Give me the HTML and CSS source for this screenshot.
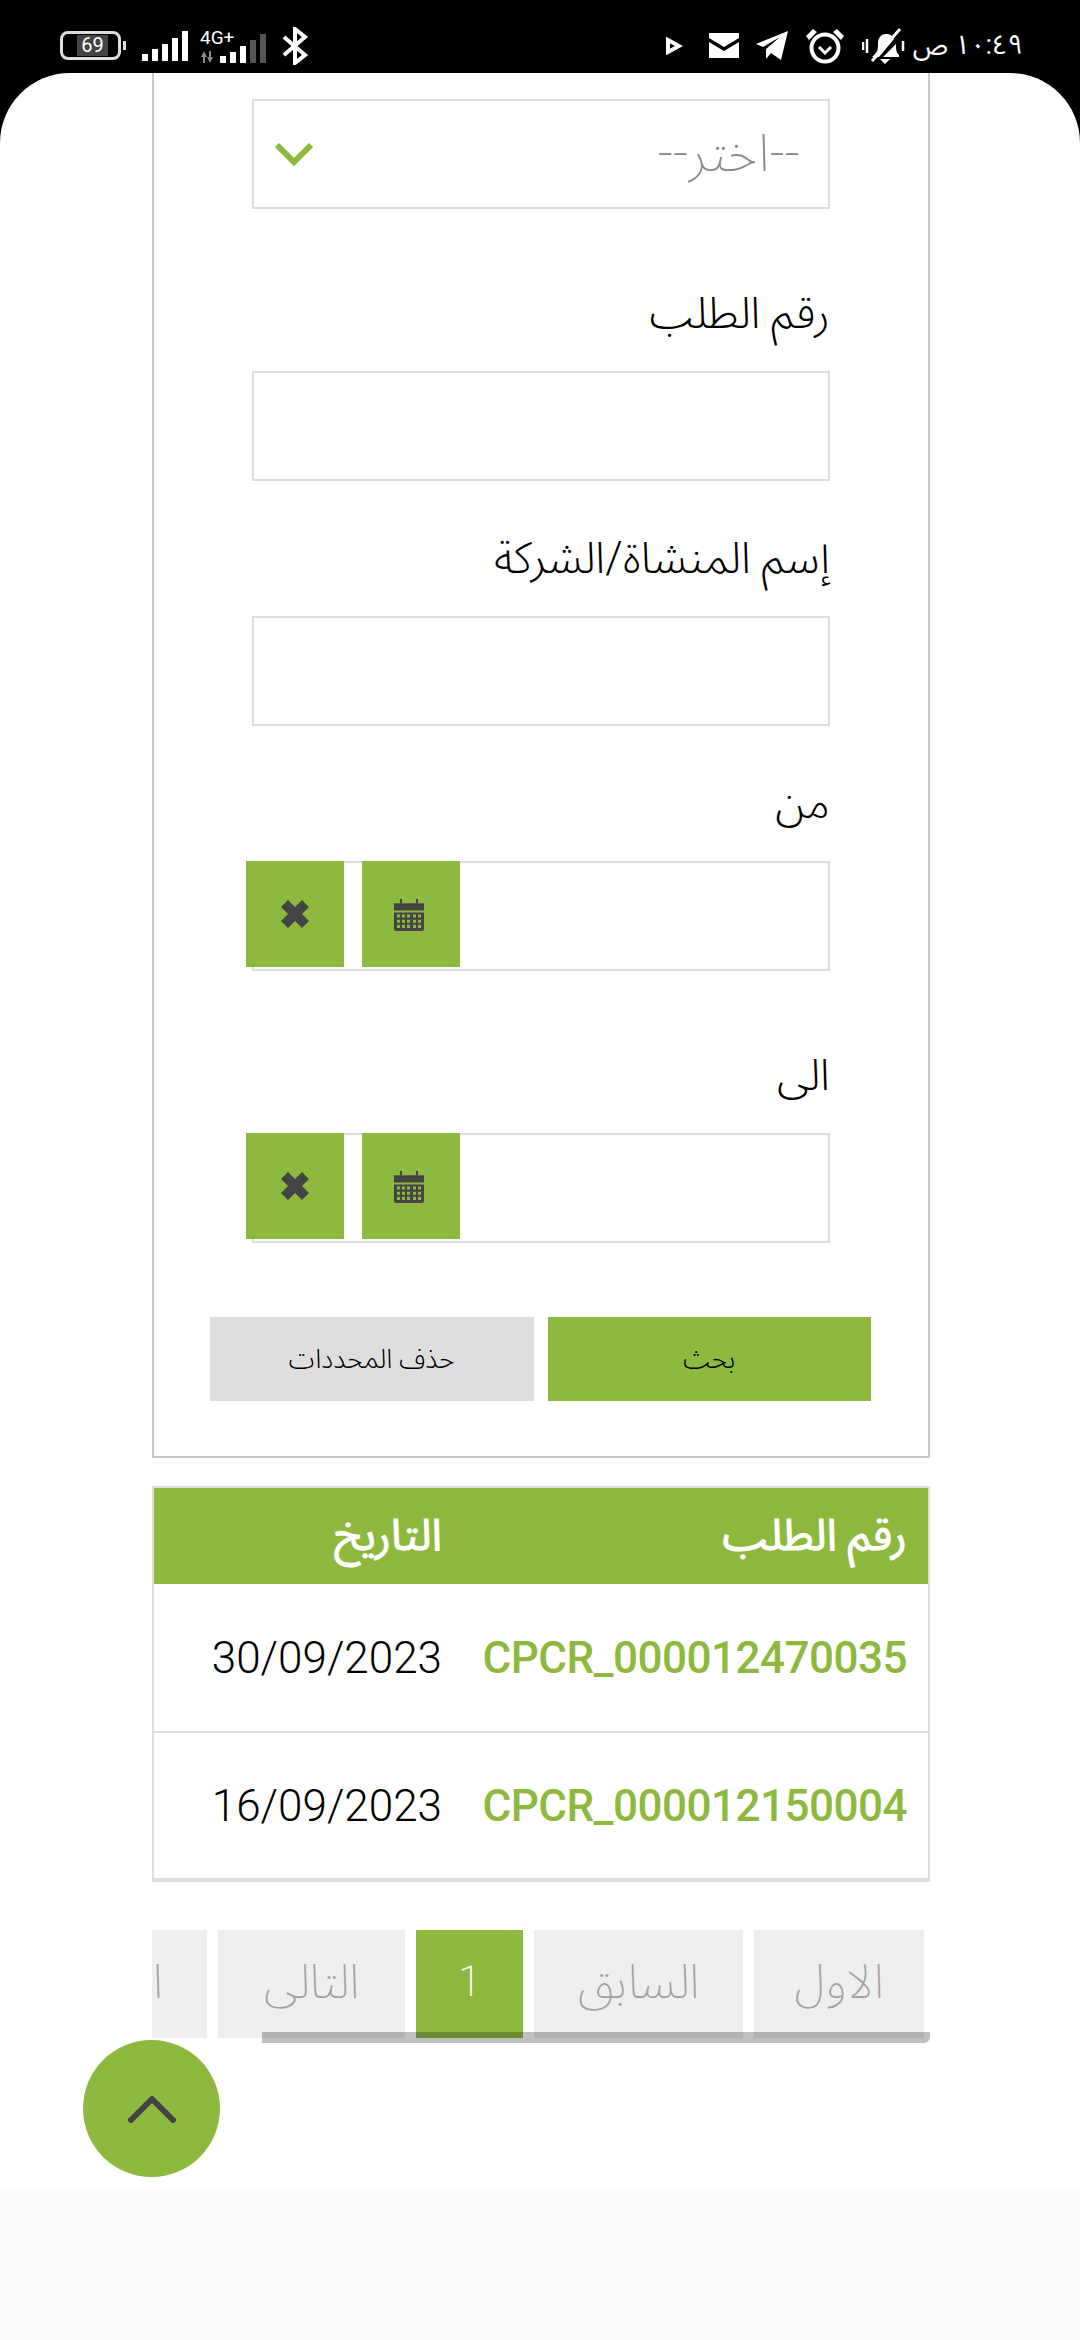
FILE: index.html
```html
<!DOCTYPE html>
<html lang="ar">
  <head>
    <meta charset="UTF-8" />
    <meta name="viewport" content="width=device-width, initial-scale=1.0" />
    <title>البحث عن الطلبات</title>
    <link rel="stylesheet" href="styles.css">
  </head>
  <body>
    <!-- phone status bar -->
    <div class="statusbar">
      <div class="status-left">
        <div class="battery"><span class="battery-level">69</span><i class="battery-nub"></i></div>
        <svg class="signal" width="46" height="30" viewBox="0 0 46 30">
          <path fill="#fff" d="M0 23h6v7H0zM10 18h6v12h-6zM20 13h6v17h-6zM30 7h6v23h-6zM40 0h6v30h-6z"/>
        </svg>
        <div class="signal-two">
          <span class="net-label">4G+</span>
          <svg width="70" height="30" viewBox="0 0 70 30">
            <path fill="#888" d="M1 24l3-6 3 6H5v6H3v-6zM9 18h2v6h2l-3 6-3-6h2z"/>
            <path fill="#fff" d="M20 23h6v7h-6zM30 19h6v11h-6zM40 13h6v17h-6z"/>
            <path fill="#555" d="M50 7h6v23h-6zM60 1h6v29h-6z"/>
          </svg>
        </div>
        <svg class="bluetooth" width="26" height="38" viewBox="0 0 26 38">
          <path fill="none" stroke="#fff" stroke-width="4" stroke-linejoin="miter" d="M2 10l21 18-10 8V2l10 8L2 28"/>
        </svg>
      </div>
      <div class="status-right">
        <svg class="icon-play" width="18" height="18" viewBox="0 0 18 18">
          <path fill="none" stroke="#fff" stroke-width="4" d="M3 3l11 6-11 6z"/>
        </svg>
        <svg width="30" height="25" viewBox="0 0 30 25">
          <path fill="#fff" d="M0 0h30v5L15 14 0 5zM0 9l15 9 15-9v16H0z"/>
        </svg>
        <svg width="32" height="29" viewBox="0 0 32 29">
          <path fill="#fff" d="M32 0L25 29 15 22 10 28V18L24 6 7 16 0 13z"/>
        </svg>
        <svg width="40" height="36" viewBox="0 0 40 36">
          <circle cx="20" cy="20" r="13.5" fill="none" stroke="#fff" stroke-width="4"/>
          <path fill="none" stroke="#fff" stroke-width="3" d="M14 19l6 6 6-6"/>
          <path fill="#fff" d="M1 8l7-7 4 3-8 8zM39 8l-7-7-4 3 8 8z"/>
        </svg>
        <svg width="44" height="38" viewBox="0 0 44 38">
          <path fill="#fff" d="M13 27c3-3 3-6 3-11 0-6 4-9 8-9s7 2 8 5L17 30h-7zM34 17c0 5 0 8 3 11v2H21zM18 32h10l-5 5z"/>
          <path stroke="#fff" stroke-width="3" d="M38 2L10 34"/>
          <path stroke="#fff" stroke-width="2.5" d="M5 12v14M1 15v8M41 14v10"/>
        </svg>
        <span class="status-time">١٠:٤٩ ص</span>
      </div>
    </div>

    <div class="sheet">
      <div class="search-panel">
        <div class="select-box">
          <span class="select-text">--اختر--</span>
          <svg class="select-arrow" width="38" height="24" viewBox="0 0 38 24">
            <path fill="none" stroke="#8eb93f" stroke-width="6" d="M2 3l17 17L36 3"/>
          </svg>
        </div>

        <label class="field-label field-label-gap">رقم الطلب</label>
        <div class="text-box"></div>

        <label class="field-label">إسم المنشاة/الشركة</label>
        <div class="text-box"></div>

        <label class="field-label">من</label>
        <div class="text-box date-box">
          <button class="date-btn date-btn-cal" type="button">
            <svg width="30" height="33" viewBox="0 0 30 32" preserveAspectRatio="none">
              <path fill="#444" d="M0 5h6V1h2v4h14V1h2v4h6v7H0z"/>
              <path fill="#444" fill-rule="evenodd" d="M0 14h30v16a2 2 0 0 1-2 2H2a2 2 0 0 1-2-2zM3 16v3h3v-3zM8 16v3h3v-3zM13 16v3h3v-3zM19 16v3h3v-3zM24 16v3h3v-3zM3 21v3h3v-3zM8 21v3h3v-3zM13 21v3h3v-3zM19 21v3h3v-3zM24 21v3h3v-3zM3 26v3h3v-3zM8 26v3h3v-3zM13 26v3h3v-3zM19 26v3h3v-3zM24 26v3h3v-3z"/>
            </svg>
          </button>
          <button class="date-btn date-btn-clear" type="button">
            <svg width="28" height="28" viewBox="0 0 28 28">
              <path fill="#444" d="M7 0l7 7 7-7 7 7-7 7 7 7-7 7-7-7-7 7-7-7 7-7-7-7z"/>
            </svg>
          </button>
        </div>

        <label class="field-label field-label-gap">الى</label>
        <div class="text-box date-box">
          <button class="date-btn date-btn-cal" type="button">
            <svg width="30" height="33" viewBox="0 0 30 32" preserveAspectRatio="none">
              <path fill="#444" d="M0 5h6V1h2v4h14V1h2v4h6v7H0z"/>
              <path fill="#444" fill-rule="evenodd" d="M0 14h30v16a2 2 0 0 1-2 2H2a2 2 0 0 1-2-2zM3 16v3h3v-3zM8 16v3h3v-3zM13 16v3h3v-3zM19 16v3h3v-3zM24 16v3h3v-3zM3 21v3h3v-3zM8 21v3h3v-3zM13 21v3h3v-3zM19 21v3h3v-3zM24 21v3h3v-3zM3 26v3h3v-3zM8 26v3h3v-3zM13 26v3h3v-3zM19 26v3h3v-3zM24 26v3h3v-3z"/>
            </svg>
          </button>
          <button class="date-btn date-btn-clear" type="button">
            <svg width="28" height="28" viewBox="0 0 28 28">
              <path fill="#444" d="M7 0l7 7 7-7 7 7-7 7 7 7-7 7-7-7-7 7-7-7 7-7-7-7z"/>
            </svg>
          </button>
        </div>

        <div class="form-actions">
          <button class="action-btn action-search" type="button">بحث</button>
          <button class="action-btn action-reset" type="button">حذف المحددات</button>
        </div>
      </div>

      <table class="results">
        <thead>
          <tr>
            <th class="col-number">رقم الطلب</th>
            <th>التاريخ</th>
          </tr>
        </thead>
        <tbody>
          <tr>
            <td class="col-number"><a href="#">CPCR_000012470035</a></td>
            <td>30/09/2023</td>
          </tr>
          <tr>
            <td class="col-number"><a href="#">CPCR_000012150004</a></td>
            <td>16/09/2023</td>
          </tr>
        </tbody>
      </table>

      <div class="pager-wrap">
        <div class="pager">
          <a class="page-item page-first" href="#">الاول</a>
          <a class="page-item page-prev" href="#">السابق</a>
          <a class="page-item page-current" href="#">1</a>
          <a class="page-item page-next" href="#">التالى</a>
          <a class="page-item page-last" href="#">الاخير</a>
        </div>
        <div class="pager-scrollbar"></div>
      </div>

      <button class="to-top" type="button">
        <svg width="48" height="28" viewBox="0 0 48 28">
          <path fill="none" stroke="#444" stroke-width="6" stroke-linecap="round" stroke-linejoin="round" d="M3 25L24 4l21 21"/>
        </svg>
      </button>

      <div class="page-footer"></div>
    </div>
  </body>
</html>
```

FILE: styles.css
```css
* {
  box-sizing: border-box;
}
body {
  margin: 0;
  background-color: #000;
  font-family: Roboto, "Noto Sans Arabic", "DejaVu Sans", sans-serif;
  color: #000;
}

/* status bar */
.statusbar {
  height: 73px;
  display: flex;
  justify-content: space-between;
  align-items: center;
  padding: 18px 57px 0 60px;
  color: #fff;
  direction: ltr;
}
.status-left,
.status-right {
  display: flex;
  align-items: center;
}
.status-left {
  gap: 12px;
}
.status-right {
  gap: 17px;
}
.battery {
  position: relative;
  width: 61px;
  height: 29px;
  border: 3px solid #ddd;
  border-radius: 8px;
  font-size: 20px;
  line-height: 23px;
  text-align: center;
  margin-right: 9px;
}
.battery-level {
  display: block;
  margin: 1px 10px 0 14px;
  height: 21px;
  line-height: 21px;
  background-color: #444;
  color: #fff;
}
.battery-nub {
  position: absolute;
  right: -8px;
  top: 7px;
  width: 3px;
  height: 9px;
  background-color: #ddd;
}
.signal-two {
  position: relative;
  width: 70px;
  height: 34px;
  padding-top: 4px;
}
.net-label {
  position: absolute;
  left: 0;
  top: -3px;
  font-size: 19px;
}
.icon-play {
  margin-right: 9px;
}
.status-time {
  font-size: 27px;
  margin-left: -10px;
  white-space: nowrap;
  direction: rtl;
}

/* white sheet */
.sheet {
  position: relative;
  background-color: #fff;
  border-radius: 70px 70px 0 0;
  direction: rtl;
  overflow: hidden;
}

/* search form */
.search-panel {
  width: 778px;
  margin-right: 150px;
  padding: 26px 98px 55px;
  border: 2px solid #c8c8c8;
  border-top: none;
}
.select-box {
  height: 110px;
  border: 2px solid #ddd;
  display: flex;
  justify-content: space-between;
  align-items: center;
  padding: 0 28px 0 21px;
}
.select-text {
  font-size: 52px;
  color: #888;
  font-weight: 200;
}
.field-label {
  display: block;
  font-size: 44px;
  font-weight: 300;
  line-height: 56px;
  margin: 49px 0 30px;
}
.field-label-gap {
  margin-top: 76px;
}
.text-box {
  height: 110px;
  border: 2px solid #ddd;
}
.date-box {
  position: relative;
}
.date-btn {
  position: absolute;
  top: -2px;
  height: 106px;
  border: none;
  padding: 0;
  background-color: #8eb93f;
  display: flex;
  align-items: center;
  justify-content: center;
}
.date-btn-cal {
  left: 108px;
  width: 98px;
  padding-right: 4px;
}
.date-btn-clear {
  left: -8px;
  width: 98px;
}
.form-actions {
  display: flex;
  gap: 14px;
  margin: 74px -41px 0 -42px;
}
.action-btn {
  flex: 1;
  height: 84px;
  border: none;
  font-family: inherit;
  font-size: 27px;
  font-weight: 300;
  color: #000;
}
.action-search {
  background-color: #8eb93f;
}
.action-reset {
  background-color: #dfdedf;
}

/* results table */
.results {
  width: 778px;
  margin: 28px 150px 0 0;
  border-collapse: collapse;
  table-layout: fixed;
  border: 2px solid #ddd;
  border-bottom-width: 4px;
  font-size: 44px;
}
.results th {
  height: 97px;
  padding: 0 21px;
  background-color: #8eb93f;
  color: #fff;
  text-align: right;
  font-size: 44px;
  font-weight: 400;
  -webkit-text-stroke: 1px #fff;
}
.results td {
  height: 148px;
  padding: 0 21px;
  font-weight: 300;
}
.results tbody tr + tr td {
  border-top: 2px solid #ddd;
}
.col-number {
  width: 466px;
}
.results a {
  color: #8eb93f;
  text-decoration: none;
  font-weight: 500;
  letter-spacing: -0.5px;
}

/* paging */
.pager-wrap {
  position: relative;
  width: 778px;
  margin: 48px 150px 150px 0;
}
.pager {
  display: flex;
  gap: 11px;
  padding-right: 6px;
  overflow: hidden;
}
.page-item {
  flex: none;
  height: 108px;
  background-color: #eee;
  color: #a0a0a0;
  font-size: 47px;
  font-weight: 200;
  line-height: 104px;
  text-align: center;
  text-decoration: none;
}
.page-first {
  width: 170px;
}
.page-prev {
  width: 209px;
}
.page-current {
  width: 107px;
  background-color: #8eb93f;
  color: #fff;
  font-size: 42px;
}
.page-next {
  width: 187px;
}
.page-last {
  padding: 0 44px;
}
.pager-scrollbar {
  position: absolute;
  left: 110px;
  right: 0;
  top: 102px;
  height: 11px;
  border-radius: 0 0 6px 0;
  background-color: rgba(0, 0, 0, 0.25);
}

/* back to top */
.to-top {
  position: absolute;
  left: 83px;
  top: 1967px;
  width: 137px;
  height: 137px;
  border: none;
  border-radius: 50%;
  background-color: #8eb93f;
  display: flex;
  align-items: center;
  justify-content: center;
}
.page-footer {
  height: 154px;
  background-color: #fafafa;
}
```
